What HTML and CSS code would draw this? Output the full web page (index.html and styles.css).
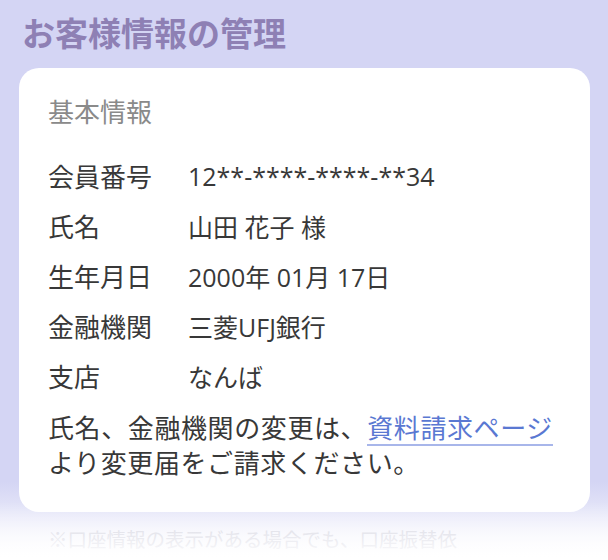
FILE: index.html
```html
<!DOCTYPE html>
<html lang="ja">
<head>
<meta charset="utf-8">
<link rel="stylesheet" href="styles.css">
</head>
<body>
<main class="page">
  <h1 class="title">お客様情報の管理</h1>
  <section class="card">
    <h2 class="section">基本情報</h2>
    <dl class="rows">
      <div class="row"><dt>会員番号</dt><dd>12**-****-****-**34</dd></div>
      <div class="row"><dt>氏名</dt><dd>山田 花子 様</dd></div>
      <div class="row"><dt>生年月日</dt><dd>2000年 01月 17日</dd></div>
      <div class="row"><dt>金融機関</dt><dd>三菱UFJ銀行</dd></div>
      <div class="row"><dt>支店</dt><dd>なんば</dd></div>
    </dl>
    <p class="note">氏名、金融機関の変更は、<a class="link" href="#">資料請求ページ</a><br>より変更届をご請求ください。</p>
  </section>
  <p class="footnote">※口座情報の表示がある場合でも、口座振替依<br>頼書の提出が必要な場合があります。</p>
  <div class="fade"></div>
</main>
</body>
</html>
```

FILE: styles.css
```css
* { box-sizing: border-box; }
html, body {
  margin: 0;
  padding: 0;
  height: 100%;
}
body {
  font-family: "Open Sans", "Noto Sans CJK JP", sans-serif;
  background: #d4d5f4;
  overflow: hidden;
}
.page {
  position: relative;
  height: 560px;
  overflow: hidden;
  padding: 0 18px 0 19px;
  background: linear-gradient(to bottom, #d4d5f4 0%, #d4d5f4 86%, #ffffff 100%);
}
.title {
  margin: 0;
  padding: 9px 0 0 3px;
  height: 68px;
  font-family: "Noto Sans CJK JP", sans-serif;
  font-size: 33px;
  line-height: 46px;
  font-weight: 700;
  color: #8e80b4;
}
.card {
  background: #ffffff;
  border-radius: 20px;
  padding: 26px 29px 31px;
}
.section {
  margin: 0 0 21px;
  font-size: 26px;
  line-height: 36px;
  font-weight: 400;
  color: #8a8a8a;
}
.rows {
  margin: 0;
}
.row {
  display: flex;
  height: 50px;
  align-items: center;
  font-size: 25px;
  color: #383838;
}
.row dt {
  width: 140px;
  flex: none;
  font-size: 26px;
}
.row dd {
  margin: 0;
}
.note {
  margin: 10px 0 0;
  font-size: 26px;
  line-height: 35px;
  letter-spacing: 0.6px;
  color: #383838;
}
.link {
  display: inline-block;
  line-height: 32px;
  color: #5a78d2;
  text-decoration: none;
  border-bottom: 2px solid #a8b6ea;
}
.footnote {
  margin: 13px 0 0 29px;
  font-size: 19.5px;
  line-height: 30px;
  color: #c4c4d4;
  white-space: nowrap;
}
.fade {
  position: absolute;
  left: 0;
  right: 0;
  bottom: 0;
  height: 58px;
  background: linear-gradient(to bottom, rgba(255,255,255,0) 0%, rgba(255,255,255,0.55) 50%, #ffffff 100%);
}
```
